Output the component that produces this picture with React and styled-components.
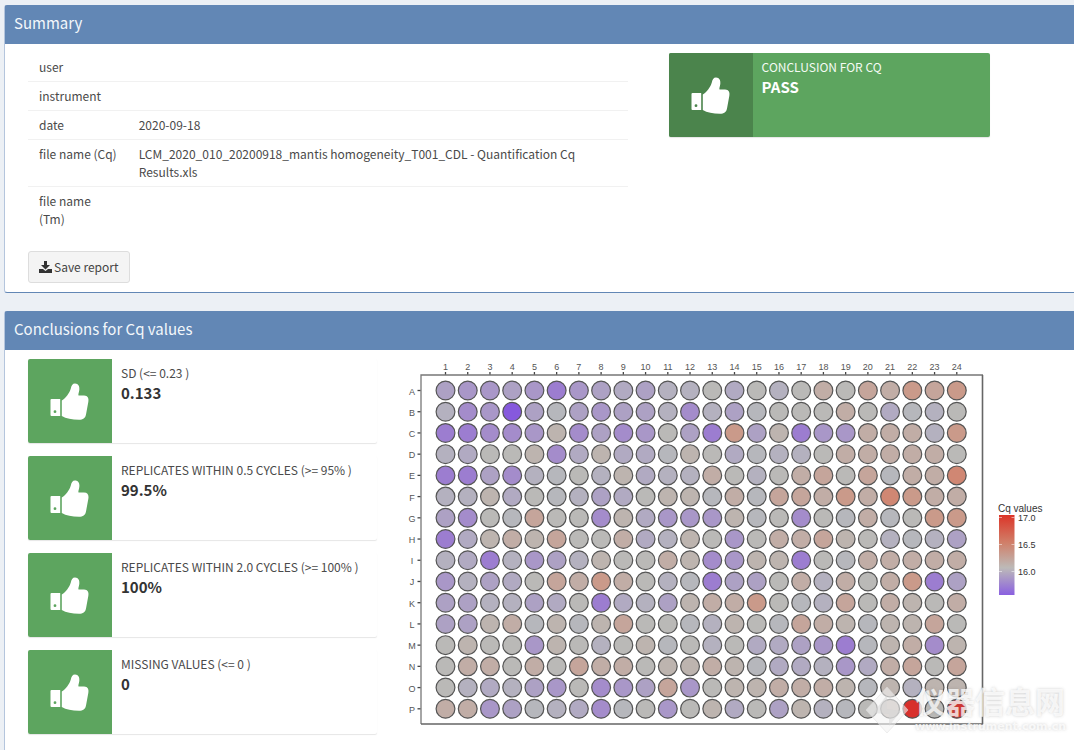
import styled, { createGlobalStyle } from "styled-components";

const GlobalStyle = createGlobalStyle`
* {
    box-sizing: border-box;
}
body {
    margin: 0;
    background: #fff;
    color: #4a4a4a;
    font-family: "Noto Sans CJK SC", "Open Sans", sans-serif;
    font-size: 12px;
    line-height: 18px;
}
`;

const Page = styled.main`
    margin-right: 6px;
    padding: 5px 0 0 4px;
    background: #ecf0f5;
    min-height: 100vh;
    display: flex;
    flex-direction: column;
    gap: 18px;
`;

const Panel = styled.section`
    background: #fff;
    border: 1px solid #6287b5;
    border-left-color: #b4c5dd;
    border-right: 0;
    border-radius: 3px 0 0 3px;
`;

const PanelTitle = styled.h3`
    margin: 0;
    padding: 7px 9px 11px;
    background: #6287b5;
    color: #f3f7fb;
    font-size: 15px;
    line-height: 20px;
    font-weight: 400;
`;

const SummaryBody = styled.div`
    display: grid;
    grid-template-columns: 599fr 321fr 43fr;
    column-gap: 41px;
    padding: 9px 0 9px 23px;
`;

const InfoTable = styled.table`
    width: 100%;
    border-collapse: collapse;
    th, td {
        padding: 5px 11px;
        text-align: left;
        vertical-align: top;
        font-weight: 400;
    }
    th {
        width: 99px;
        white-space: nowrap;
    }
    tr + tr {
        border-top: 1px solid #f1f1f1;
    }
    td {
        padding-right: 40px;
    }
`;

const SaveButton = styled.button`
    display: inline-flex;
    align-items: center;
    gap: 2px;
    margin-top: 18px;
    padding: 6px 10px;
    background: #f4f4f4;
    border: 1px solid #ddd;
    border-radius: 3px;
    color: #444;
    font: inherit;
`;

const InfoBox = styled.div`
    display: flex;
    height: 84px;
    border-radius: 2px;
    background: ${(props) => (props.$filled ? "#5da55f" : "#fff")};
    color: ${(props) => (props.$filled ? "#f4fbf4" : "#4a4a4a")};
    box-shadow: 0 1px 1px rgba(0, 0, 0, 0.1);
    strong {
        display: block;
        font-size: 15px;
        line-height: 22px;
        color: ${(props) => (props.$filled ? "#fff" : "#333")};
    }
`;

const InfoIcon = styled.span`
    display: flex;
    align-items: center;
    justify-content: center;
    width: 84px;
    flex: none;
    border-radius: 2px 0 0 2px;
    background: ${(props) => (props.$dark ? "#4b844c" : "#5da55f")};
`;

const InfoContent = styled.div`
    padding: 5px 9px;
    text-transform: uppercase;
    white-space: nowrap;
`;

const ConclusionBody = styled.div`
    display: grid;
    grid-template-columns: 349fr 674fr;
    column-gap: 23px;
    padding: 9px 0 20px 23px;
`;

const BoxList = styled.div`
    display: flex;
    flex-direction: column;
    gap: 13px;
`;

const ChartArea = styled.div`
    position: relative;
    svg {
        display: block;
    }
`;

const Watermark = styled.div`
    position: absolute;
    right: 8px;
    bottom: 0;
    display: flex;
    align-items: center;
    gap: 6px;
    color: rgba(255, 255, 255, 0.75);
    text-shadow: 0 0 3px rgba(120, 120, 120, 0.35);
    font-weight: 700;
`;

const WatermarkName = styled.div`
    font-family: "Liberation Sans", "Noto Sans CJK SC", sans-serif;
    font-size: 30px;
    line-height: 34px;
`;

const WatermarkUrl = styled.div`
    font-family: "DejaVu Sans", sans-serif;
    font-size: 11px;
    line-height: 14px;
`;

const colours = {
    9: "#8659dd",
    8: "#9c7dd0",
    7: "#a48ccb",
    6: "#a997c8",
    5: "#ada1c4",
    4: "#b1aac2",
    3: "#b4b1bf",
    2: "#b6b7bc",
    1: "#bab9b7",
    a: "#bdb4af",
    b: "#c1ada6",
    c: "#c5a59b",
    d: "#ca9a8a",
    e: "#d08773",
    f: "#d8302c",
};

// one character per well, 9 = lowest Cq, f = highest
const plate = {
    A: "566568654533" + "14131b1cbdcd",
    B: "376952565537" + "352111b14231",
    C: "88776a757615" + "8d5a866bbb3d",
    D: "3411a74a442a" + "142331bbbbb1",
    E: "88573213a433" + "b131bc1c2bbe",
    F: "33a4123541aa" + "2b2ccbdbedbb",
    G: "5712c117a466" + "6a21712b21dd",
    H: "84abac11b43a" + "161bbca13235",
    I: "3483653a11ba" + "76aa812bbbbb",
    J: "63541cbdb132" + "8551b3b1bd85",
    K: "55335418435a" + "bbd123c1ba1b",
    L: "55ab2a2ac112" + "3a12cba2aac1",
    M: "1a116a131a21" + "31445682ab7a",
    N: "1bb1b1cbb1aa" + "ba244364bc1c",
    O: "1343561765c6" + "1aabbba2a3aa",
    P: "bb6523472161" + "a415a321af1f",
};

function ThumbsUp() {
    return (
        <svg width="40" height="38" viewBox="0 0 40 38" aria-hidden="true">
            <path
                fill="#fff"
                fillRule="evenodd"
                d="M1.500 17H10.200V34H1.500Q0.500 34 0.500 33V18Q0.500 17 1.500 17zM5 28.300a1.400 1.400 0 1 0 0 2.800a1.400 1.400 0 1 0 0-2.800z"
            />
            <path
                fill="#fff"
                d="M11.800 18.500C16 16 19.500 11 20.800 6.500C21.400 3.500 22.500 1.500 25 1.500C28.500 1.500 29.800 4.500 29.300 8C29 10.500 28 12.500 28.500 13.500H34C38 13.500 39 16.500 38.300 20L36 32.500C35.300 36.200 33 37.800 29 37.800C22 37.800 16 36.500 11.800 34z"
            />
        </svg>
    );
}

function DownloadIcon() {
    return (
        <svg width="13" height="12" viewBox="0 0 13 12" aria-hidden="true">
            <path fill="#333" d="M5 0h3v4h3L6.500 8.500L2 4h3z" />
            <path fill="#333" d="M0 8h4l2.500 2L9 8h4v4H0z" />
        </svg>
    );
}

function StatusBox({ label, value, filled }) {
    return (
        <InfoBox $filled={filled}>
            <InfoIcon $dark={filled}>
                <ThumbsUp />
            </InfoIcon>
            <InfoContent>
                {label}
                <strong>{value}</strong>
            </InfoContent>
        </InfoBox>
    );
}

function PlateChart() {
    const colX = (i) => 445.5 + i * 22.23;
    const rowY = (i) => 390.5 + i * 21.22;
    return (
        <svg
            width="100%"
            viewBox="400 359 674 372"
            fontFamily='"Liberation Sans", Arial, sans-serif'
            fontSize="9"
            fill="#555"
            role="img"
            aria-label="Cq values by well"
        >
            <defs>
                <linearGradient id="cq" x1="0" y1="0" x2="0" y2="1">
                    <stop offset="0" stopColor="#dc3528" />
                    <stop offset="0.350" stopColor="#d0806a" />
                    <stop offset="0.660" stopColor="#bdbab8" />
                    <stop offset="1" stopColor="#8a60e0" />
                </linearGradient>
            </defs>
            <path d="M421 724V375H983" fill="none" stroke="#777" strokeWidth="1.300" />
            <path d="M421 724H982.500V375" fill="none" stroke="#666" strokeWidth="1.600" />
            {Object.keys(plate).map((row, r) => (
                <g key={row}>
                    <text x="412" y={rowY(r) + 4} textAnchor="middle">{row}</text>
                    <path d={`M417.500 ${rowY(r)}h3`} stroke="#444" strokeWidth="1.300" />
                    {plate[row].split("").map((c, i) => (
                        <circle
                            key={i}
                            cx={colX(i)}
                            cy={rowY(r)}
                            r="9.400"
                            fill={colours[c]}
                            stroke="#555"
                            strokeWidth="1.200"
                        />
                    ))}
                </g>
            ))}
            {plate.A.split("").map((c, i) => (
                <g key={i}>
                    <text x={colX(i)} y="370" textAnchor="middle">{i + 1}</text>
                    <path d={`M${colX(i)} 372v2.500`} stroke="#444" strokeWidth="1.300" />
                </g>
            ))}
            <text x="998" y="512" fontSize="10" fill="#333">Cq values</text>
            <rect x="999" y="515" width="15.500" height="80" fill="url(#cq)" />
            {["17.0", "16.5", "16.0"].map((tick, i) => (
                <g key={tick}>
                    <path
                        d={`M999 ${517.5 + i * 27}h3M1011.500 ${517.5 + i * 27}h3`}
                        stroke="#fff"
                        strokeOpacity="0.500"
                    />
                    <text x="1018" y={521 + i * 27} fill="#333">{tick}</text>
                </g>
            ))}
        </svg>
    );
}

export default function App() {
    return (
        <>
            <GlobalStyle />
            <Page>
                <Panel>
                    <PanelTitle>Summary</PanelTitle>
                    <SummaryBody>
                        <div>
                            <InfoTable>
                                <tbody>
                                    <tr><th scope="row">user</th><td></td></tr>
                                    <tr><th scope="row">instrument</th><td></td></tr>
                                    <tr><th scope="row">date</th><td>2020-09-18</td></tr>
                                    <tr>
                                        <th scope="row">file name (Cq)</th>
                                        <td>LCM_2020_010_20200918_mantis homogeneity_T001_CDL - Quantification Cq Results.xls</td>
                                    </tr>
                                    <tr><th scope="row">file name<br />(Tm)</th><td></td></tr>
                                </tbody>
                            </InfoTable>
                            <SaveButton type="button">
                                <DownloadIcon />
                                Save report
                            </SaveButton>
                        </div>
                        <StatusBox filled label="Conclusion for Cq" value="PASS" />
                    </SummaryBody>
                </Panel>
                <Panel>
                    <PanelTitle>Conclusions for Cq values</PanelTitle>
                    <ConclusionBody>
                        <BoxList>
                            <StatusBox label="SD (<= 0.23 )" value="0.133" />
                            <StatusBox label="Replicates within 0.5 cycles (>= 95% )" value="99.5%" />
                            <StatusBox label="Replicates within 2.0 cycles (>= 100% )" value="100%" />
                            <StatusBox label="Missing values (<= 0 )" value="0" />
                        </BoxList>
                        <ChartArea>
                            <PlateChart />
                            <Watermark>
                                <svg width="44" height="48" viewBox="0 0 44 48" aria-hidden="true">
                                    <path
                                        d="M22 1L43 24L22 47L1 24z"
                                        fill="#f4f4f4"
                                        fillOpacity="0.600"
                                        stroke="#ddd"
                                        strokeOpacity="0.500"
                                    />
                                    <path d="M8 27L22 9v14L36 25L24 40V28z" fill="#d5d5d5" fillOpacity="0.500" />
                                </svg>
                                <div>
                                    <WatermarkName>仪器信息网</WatermarkName>
                                    <WatermarkUrl>www.instrument.com.cn</WatermarkUrl>
                                </div>
                            </Watermark>
                        </ChartArea>
                    </ConclusionBody>
                </Panel>
            </Page>
        </>
    );
}
